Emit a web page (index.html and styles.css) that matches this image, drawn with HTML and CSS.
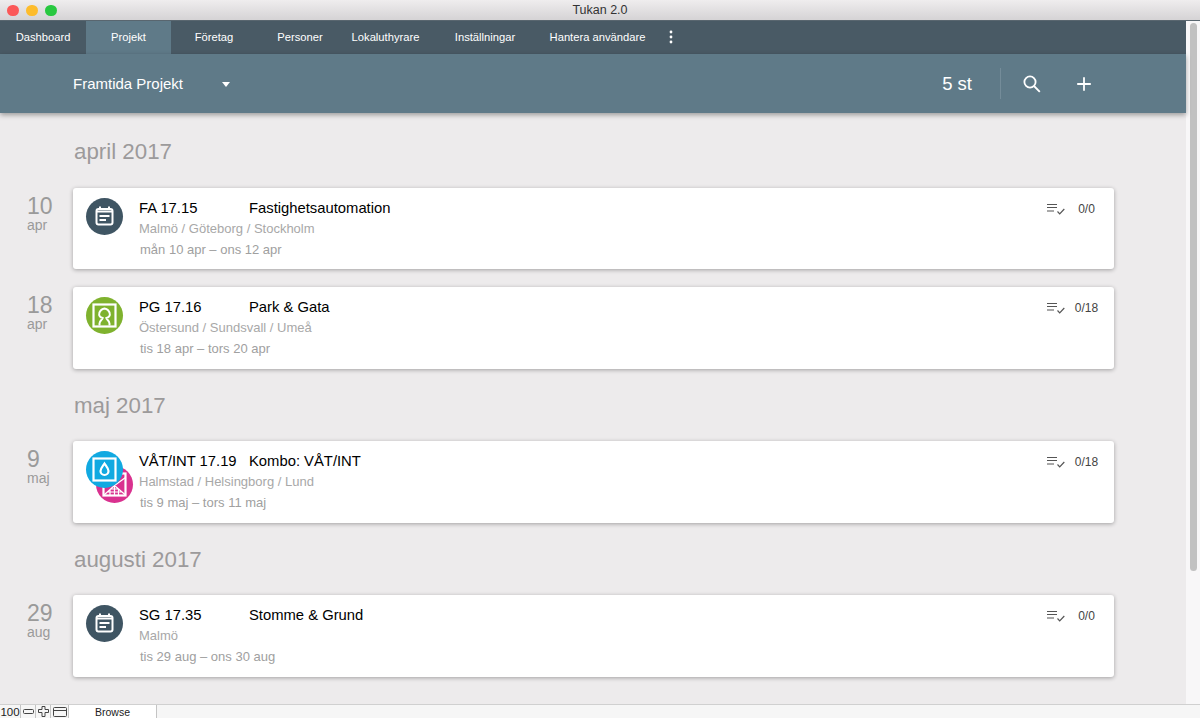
FILE: index.html
```html
<!DOCTYPE html>
<html lang="sv">
<head>
<meta charset="utf-8">
<title>Tukan 2.0</title>
<link rel="stylesheet" href="styles.css">
</head>
<body>
<div class="window">
  <header class="titlebar">
    <div class="lights"><i class="light l-red"></i><i class="light l-yellow"></i><i class="light l-green"></i></div>
    <span class="title">Tukan 2.0</span>
  </header>
  <div class="body">
    <div class="app">
      <nav class="nav">
        <a class="nav-item">Dashboard</a>
        <a class="nav-item active">Projekt</a>
        <a class="nav-item">Företag</a>
        <a class="nav-item">Personer</a>
        <a class="nav-item">Lokaluthyrare</a>
        <a class="nav-item">Inställningar</a>
        <a class="nav-item">Hantera användare</a>
        <a class="nav-item kebab"><svg width="4" height="14" viewBox="0 0 4 14"><circle cx="2" cy="2" r="1.4"/><circle cx="2" cy="7" r="1.4"/><circle cx="2" cy="12" r="1.4"/></svg></a>
      </nav>
      <div class="toolbar">
        <span class="view-name">Framtida Projekt</span>
        <i class="caret"></i>
        <span class="count">5 st</span>
        <i class="divider"></i>
        <svg class="tool search" width="20" height="20" viewBox="0 0 20 20"><circle cx="8" cy="8" r="5.6"/><path d="M12 12l5.800 5.800"/></svg>
        <svg class="tool plus" width="16" height="16" viewBox="0 0 16 16"><path d="M8 1.200v13.600M1.200 8h13.600"/></svg>
      </div>
      <main class="content">
        <h2 class="month">april 2017</h2>
        <section class="row">
          <div class="day"><b>10</b><span>apr</span></div>
          <article class="card">
            <div class="badge"><svg class="ico dark" viewBox="0 0 37 37"><use href="#cal"/></svg></div>
            <div class="info">
              <div class="head"><span class="code">FA 17.15</span><span class="name">Fastighetsautomation</span></div>
              <div class="cities">Malmö / Göteborg / Stockholm</div>
              <div class="dates">mån 10 apr – ons 12 apr</div>
            </div>
            <div class="tasks"><svg class="check" viewBox="0 0 18 12"><use href="#tasks"/></svg><span class="tally">0/0</span></div>
          </article>
        </section>
        <section class="row">
          <div class="day"><b>18</b><span>apr</span></div>
          <article class="card">
            <div class="badge"><svg class="ico green" viewBox="0 0 37 37"><use href="#tree"/></svg></div>
            <div class="info">
              <div class="head"><span class="code">PG 17.16</span><span class="name">Park &amp; Gata</span></div>
              <div class="cities">Östersund / Sundsvall / Umeå</div>
              <div class="dates">tis 18 apr – tors 20 apr</div>
            </div>
            <div class="tasks"><svg class="check" viewBox="0 0 18 12"><use href="#tasks"/></svg><span class="tally">0/18</span></div>
          </article>
        </section>
        <h2 class="month">maj 2017</h2>
        <section class="row">
          <div class="day"><b>9</b><span>maj</span></div>
          <article class="card">
            <div class="badge">
              <svg class="ico pink under" viewBox="0 0 37 37"><use href="#wall"/></svg>
              <svg class="ico blue" viewBox="0 0 37 37"><use href="#drop"/></svg>
            </div>
            <div class="info">
              <div class="head"><span class="code">VÅT/INT 17.19</span><span class="name">Kombo: VÅT/INT</span></div>
              <div class="cities">Halmstad / Helsingborg / Lund</div>
              <div class="dates">tis 9 maj – tors 11 maj</div>
            </div>
            <div class="tasks"><svg class="check" viewBox="0 0 18 12"><use href="#tasks"/></svg><span class="tally">0/18</span></div>
          </article>
        </section>
        <h2 class="month">augusti 2017</h2>
        <section class="row">
          <div class="day"><b>29</b><span>aug</span></div>
          <article class="card">
            <div class="badge"><svg class="ico dark" viewBox="0 0 37 37"><use href="#cal"/></svg></div>
            <div class="info">
              <div class="head"><span class="code">SG 17.35</span><span class="name">Stomme &amp; Grund</span></div>
              <div class="cities">Malmö</div>
              <div class="dates">tis 29 aug – ons 30 aug</div>
            </div>
            <div class="tasks"><svg class="check" viewBox="0 0 18 12"><use href="#tasks"/></svg><span class="tally">0/0</span></div>
          </article>
        </section>
      </main>
    </div>
    <div class="scrollbar"><i class="thumb"></i></div>
  </div>
  <footer class="status">
    <span class="cell zoom">100</span>
    <span class="cell btn"><svg width="11" height="5" viewBox="0 0 11 5"><rect x=".5" y=".5" width="10" height="4" rx="1"/></svg></span>
    <span class="cell btn"><svg width="11" height="11" viewBox="0 0 11 11"><path d="M4 .5h3v3h3.500v3h-3.500v4h-3v-4h-3.500v-3h3.500z"/></svg></span>
    <span class="cell btn wide"><svg width="14" height="10" viewBox="0 0 14 10"><rect x=".5" y=".5" width="13" height="9" rx="1"/><path d="M.5 3.500h13"/></svg></span>
    <span class="cell browse">Browse</span>
  </footer>
</div>
<svg class="defs" width="0" height="0">
  <defs>
    <g id="cal" fill="none" stroke="#fff" stroke-width="2">
      <rect x="10.500" y="11" width="16" height="15.500" rx="2"/>
      <path d="M14 8.500v3M23 8.500v3M10.500 13.500h16"/>
      <path d="M13.500 18h10M13.500 22h6.500" stroke-width="1.800"/>
    </g>
    <g id="tree" fill="none" stroke="#fff">
      <rect x="7.500" y="7.500" width="22" height="22" stroke-width="2.200"/>
      <path stroke-width="2" d="M13.500 28.500v-2c0-3 3-3.500 3.200-5.500c-2.500-.5-4-2.500-3.500-4.500c.5-2.500 3-4.500 5.300-5c2.300.5 4.800 2.500 5.300 5c.5 2-1 4-3.500 4.500c.2 2 3.200 2.500 3.200 5.500v2"/>
    </g>
    <g id="drop" fill="none" stroke="#fff">
      <rect x="7.500" y="7.500" width="22" height="22" stroke-width="2.200"/>
      <path stroke-width="2.200" d="M18.500 12.500c2 3 4 4.800 4 7.500a4 4 0 0 1-8 0c0-2.700 2-4.500 4-7.500z"/>
    </g>
    <g id="wall" fill="none" stroke="#fff">
      <rect x="7.500" y="7.500" width="22" height="22" stroke-width="2.200"/>
      <path stroke-width="1.200" d="M8 29l10.500-9.500 11-8M18.500 19.500l11 9.500M12 26h14M15 23h7.500M18.500 20v9M22.500 23v6M14 24v5"/>
    </g>
    <g id="tasks" fill="none" stroke="#555" stroke-width="1.200">
      <path d="M0 1.500h10M0 4.500h10M0 8h7M10.500 8.500l2.200 2.300 4.600-4.800"/>
    </g>
  </defs>
</svg>
</body>
</html>
```
FILE: styles.css
```css
* { box-sizing: border-box; }
html, body { margin: 0; height: 100%; overflow: hidden; }
body { font-family: "Liberation Sans", Arial, sans-serif; }

.window { display: flex; flex-direction: column; height: 718px; background: #edebec; }
.defs { position: absolute; }

.titlebar { position: relative; flex: 0 0 21px; display: flex; align-items: center; justify-content: center; background: linear-gradient(#efedee, #d5d3d5); border-bottom: 1px solid #59666f; }
.title { font-size: 12.500px; color: #333; }
.lights { position: absolute; left: 7px; top: 4.500px; display: flex; gap: 7.500px; }
.light { width: 11.500px; height: 11.500px; border-radius: 50%; }
.l-red { background: #fb5858; }
.l-yellow { background: #fdbc2c; }
.l-green { background: #28c840; }

.body { flex: 1; display: flex; min-height: 0; }
.app { flex: 1; display: flex; flex-direction: column; min-width: 0; }

.nav { flex: 0 0 33px; display: grid; grid-template-columns: 86px 85px 86px 86px 85px 114px 111px 36px; justify-content: start; background: #495a65; }
.nav-item { display: flex; align-items: center; justify-content: center; padding-bottom: 1px; color: #fff; font-size: 11.200px; }
.nav-item.active { background: #5f7a88; }
.kebab svg { fill: #fff; }

.toolbar { position: relative; z-index: 1; flex: 0 0 59px; display: flex; align-items: center; padding-left: 73px; background: #5f7a88; color: #fff; box-shadow: 0 2px 5px rgba(0, 0, 0, .35); }
.view-name { font-size: 15px; }
.caret { margin: 2px 0 0 39px; border: 4.500px solid transparent; border-top: 5px solid #fff; border-bottom: 0; }
.count { margin-left: auto; font-size: 18.500px; }
.divider { width: 1px; height: 31px; margin-left: 28px; background: #748c99; }
.tool { fill: none; stroke: #fff; }
.search { margin-left: 21px; stroke-width: 1.800; }
.plus { margin: 0 94px 0 34px; stroke-width: 1.800; }

.content { flex: 1; min-height: 0; overflow: hidden; padding-top: 20px; }
.month { height: 36.500px; margin: 0 0 18px 74px; font-size: 22.300px; font-weight: 400; line-height: 38px; color: #9c9a9b; }
.row { display: flex; margin-bottom: 18px; }
.day { flex: 0 0 73px; padding: 6px 0 0 27px; color: #9a9a9a; }
.day b { display: block; font-size: 23px; font-weight: 400; line-height: 24px; }
.day span { display: block; font-size: 14px; line-height: 15px; }

.card { display: flex; flex: 0 0 1041px; height: 81.600px; background: #fff; border-radius: 3px; box-shadow: 0 1px 4px rgba(0, 0, 0, .32); }
.badge { position: relative; flex: 0 0 66px; padding: 10px 0 0 12.500px; }
.ico { display: block; width: 37px; height: 37px; border-radius: 50%; }
.dark { background: #3f5563; }
.green { background: #7fb22e; }
.blue { position: relative; background: #11a9e1; }
.pink { background: #d9318f; }
.under { position: absolute; left: 23px; top: 25px; }

.info { flex: 1; padding-top: 10px; }
.head { display: flex; height: 20px; align-items: center; color: #000; font-size: 14.800px; }
.code { flex: 0 0 110px; }
.cities { height: 21px; line-height: 21px; font-size: 13px; color: #a8a8a8; }
.dates { height: 22px; padding-left: 1px; line-height: 22px; font-size: 13px; color: #a0a0a0; }

.tasks { flex: 0 0 67px; display: flex; align-items: flex-start; padding-top: 13px; color: #444; font-size: 12px; }
.check { width: 18px; height: 12px; margin-top: 2px; }
.tally { flex: 1; padding: 1px 6px 0 0; text-align: center; line-height: 14px; }

.scrollbar { flex: 0 0 14px; padding: 2px 3px 0 4px; background: #f8f7f8; }
.thumb { display: block; width: 7px; height: 548px; border-radius: 4px; background: #c1c1c1; }

.status { flex: 0 0 14px; display: flex; background: #f6f6f6; border-top: 1px solid #d0d0d0; font-size: 10.500px; color: #222; }
.cell { display: flex; align-items: center; justify-content: center; border-right: 1px solid #c4c4c4; }
.zoom { width: 21px; font-size: 11.500px; }
.btn { width: 15px; }
.btn.wide { width: 18px; }
.btn svg { fill: none; stroke: #444; }
.browse { width: 88px; background: #fff; }
```
